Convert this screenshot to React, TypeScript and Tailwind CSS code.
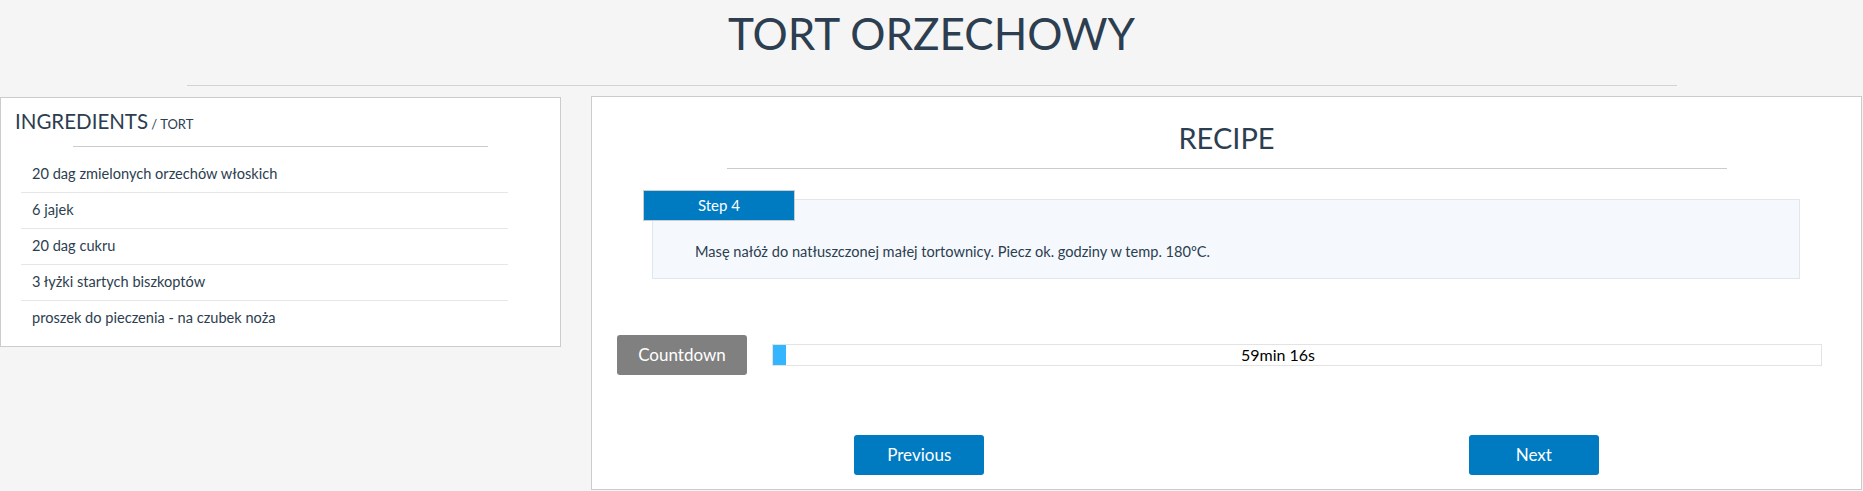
import React from "react";

const ingredients = [
  "20 dag zmielonych orzechów włoskich",
  "6 jajek",
  "20 dag cukru",
  "3 łyżki startych biszkoptów",
  "proszek do pieczenia - na czubek noża",
];

export default function App() {
  return (
    <div className="h-[491px] w-full overflow-hidden bg-[#f5f5f5] font-['Lato','Open_Sans',sans-serif] text-[#2c3e50]">
      <header className="h-[85px] pt-[11px] text-center">
        <h1 className="text-[44px] leading-none font-normal">TORT ORZECHOWY</h1>
      </header>
      <div className="mx-auto h-px w-[1490px] bg-[#d3d3d3]" />

      <div className="mt-[10px] flex items-start">
        {/* ingredients */}
        <section className="mt-px h-[250px] w-[561px] shrink-0 border border-[#cccccc] bg-white">
          <h3 className="pt-[13px] pl-[14px] leading-none">
            <span className="text-[20.5px]">INGREDIENTS</span>
            <span className="text-[13px]"> / TORT</span>
          </h3>
          <div className="mx-auto mt-[14px] h-px w-[415px] bg-[#cccccc]" />
          <ul className="mt-[9px] ml-[20px] w-[487px]">
            {ingredients.map((item, i) => (
              <li
                key={item}
                className={
                  "flex h-[36px] items-center pl-[11px] text-[14.6px] " +
                  (i > 0 ? "border-t border-[#e6e6e6]" : "")
                }
              >
                {item}
              </li>
            ))}
          </ul>
        </section>

        {/* recipe */}
        <section className="ml-[30px] h-[394px] w-[1271px] shrink-0 border border-[#cccccc] bg-white">
          <h2 className="pt-[26px] text-center text-[29px] leading-none">RECIPE</h2>
          <div className="mx-auto mt-[16px] h-px w-[1000px] bg-[#cccccc]" />

          <div className="relative mt-[30px] ml-[60px] h-[80px] w-[1148px] border border-[#e1e6ea] bg-[#f5f9fd] pt-[42px] pl-[42px]">
            <div className="absolute -top-[10px] -left-[10px] flex h-[31px] w-[152px] items-center justify-center border border-[#cccccc] bg-[#007bc2] text-[15px] text-white">
              Step 4
            </div>
            <p className="text-[14.6px] leading-[20px]">
              Masę nałóż do natłuszczonej małej tortownicy. Piecz ok. godziny w temp. 180ºC.
            </p>
          </div>

          <div className="mt-[56px] ml-[25px] flex items-center">
            <button className="h-[40px] w-[130px] rounded-[3px] bg-[#808080] text-[17px] text-white">
              Countdown
            </button>
            <div className="relative ml-[25px] h-[22px] w-[1050px] border border-[#e3e3e3] bg-white">
              <div className="h-full w-[13px] bg-[#33b5ff]" />
              <span className="absolute inset-0 flex items-center justify-center pr-[38px] text-[16px] text-black">
                59min 16s
              </span>
            </div>
          </div>

          <div className="mt-[60px] grid grid-cols-2 justify-items-center px-[20px]">
            <button className="h-[40px] w-[130px] rounded-[3px] bg-[#007bc2] text-[17px] text-white">
              Previous
            </button>
            <button className="h-[40px] w-[130px] rounded-[3px] bg-[#007bc2] text-[17px] text-white">
              Next
            </button>
          </div>
        </section>
      </div>
    </div>
  );
}
